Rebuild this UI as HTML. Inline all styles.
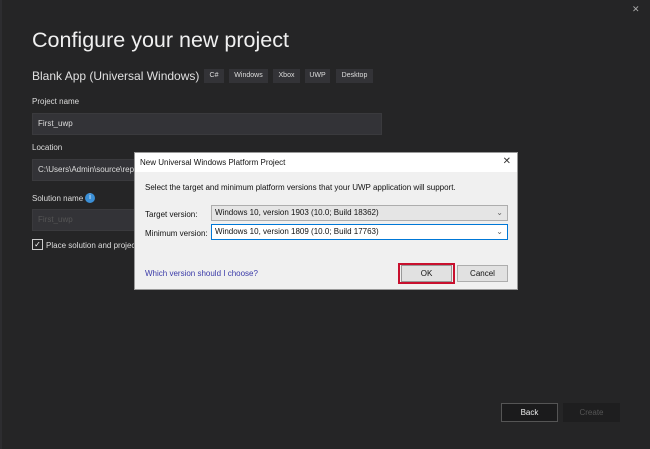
<!DOCTYPE html>
<html><head><style>
*{margin:0;padding:0;box-sizing:border-box}
body{width:650px;height:449px;background:#252526;position:relative;overflow:hidden;font-family:"Liberation Sans",sans-serif;color:#e8e8e8}
.a{position:absolute}
.tag{position:absolute;top:69px;height:14px;background:#333337;font-size:7px;line-height:14px;text-align:center;color:#ddd}
.lbl{position:absolute;left:32px;font-size:8px;color:#ddd}
.inp{position:absolute;left:32px;width:350px;height:22px;background:#333337;border:1px solid #3a3a3d;font-size:8px;line-height:20px;padding-left:5px;color:#ddd}
.dlg{position:absolute;left:134px;top:152px;width:384px;height:138px;background:#f0f0f0;border:1px solid #999;color:#111}
.sel{position:absolute;left:76px;width:297px;height:16px;border:1px solid #adadad;background:#e5e5e5;font-size:8px;line-height:14px;padding-left:3px}
.btn{position:absolute;height:17px;font-size:8px;line-height:15px;text-align:center;background:#e1e1e1;border:1px solid #adadad}
</style></head><body>
<div class="a" style="left:0;top:0;width:2px;height:449px;background:#2d2d30"></div>
<div class="a" style="left:632px;top:4px;font-size:9px;color:#aaa">✕</div>
<div class="a" style="left:32px;top:28px;font-size:21.5px;color:#f0f0f0">Configure your new project</div>
<div class="a" style="left:32px;top:69px;font-size:12px;color:#e0e0e0">Blank App (Universal Windows)</div>
<div class="tag" style="left:204px;width:20px">C#</div>
<div class="tag" style="left:229px;width:39px">Windows</div>
<div class="tag" style="left:273px;width:27px">Xbox</div>
<div class="tag" style="left:305px;width:25px">UWP</div>
<div class="tag" style="left:336px;width:37px">Desktop</div>
<div class="lbl" style="top:97px">Project name</div>
<div class="inp" style="top:113px">First_uwp</div>
<div class="lbl" style="top:143px">Location</div>
<div class="inp" style="top:159px">C:\Users\Admin\source\repos</div>
<div class="lbl" style="top:194px">Solution name</div>
<div class="a" style="left:85px;top:193px;width:10px;height:10px;border-radius:50%;background:#3b8fd6;color:#fff;font-size:7px;line-height:10px;text-align:center">i</div>
<div class="inp" style="top:209px;color:#555">First_uwp</div>
<div class="a" style="left:32px;top:239px;width:11px;height:11px;border:1px solid #ccc;font-size:8px;line-height:9px;text-align:center;color:#fff">✓</div>
<div class="lbl" style="left:46px;top:241px">Place solution and project in the same directory</div>
<div class="dlg">
 <div class="a" style="left:0;top:0;width:382px;height:19px;background:#fff;font-size:8px;line-height:19px;padding-left:5px">New Universal Windows Platform Project</div>
 <div class="a" style="right:6px;top:3px;font-size:10px;color:#333">✕</div>
 <div class="a" style="left:10px;top:30px;font-size:8px">Select the target and minimum platform versions that your UWP application will support.</div>
 <div class="a" style="left:10px;top:57px;font-size:8px">Target version:</div>
 <div class="sel" style="top:52px">Windows 10, version 1903 (10.0; Build 18362)<span style="position:absolute;right:4px;color:#666">⌄</span></div>
 <div class="a" style="left:10px;top:76px;font-size:8px">Minimum version:</div>
 <div class="sel" style="top:71px;background:#fff;border-color:#0078d7">Windows 10, version 1809 (10.0; Build 17763)<span style="position:absolute;right:4px;color:#666">⌄</span></div>
 <div class="a" style="left:10px;top:116px;font-size:8px;color:#3a3aa8">Which version should I choose?</div>
 <div class="a" style="left:263px;top:110px;width:57px;height:21px;border:2px solid #c8102e"></div>
 <div class="btn" style="left:266px;top:112px;width:51px;border-color:#999">OK</div>
 <div class="btn" style="left:322px;top:112px;width:51px">Cancel</div>
</div>
<div class="a" style="left:501px;top:403px;width:57px;height:19px;background:#1b1b1c;border:1px solid #555;font-size:8px;line-height:17px;text-align:center;color:#eee">Back</div>
<div class="a" style="left:563px;top:403px;width:57px;height:19px;background:#1e1e1f;font-size:8px;line-height:19px;text-align:center;color:#555">Create</div>
</body></html>
